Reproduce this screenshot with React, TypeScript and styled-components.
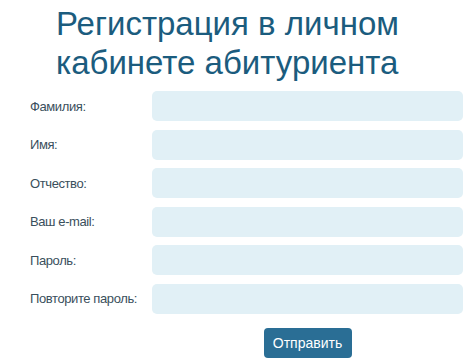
import styled, { createGlobalStyle } from "styled-components";

const GlobalStyle = createGlobalStyle`
  body {
    margin: 0;
    background: #ffffff;
    font-family: "Liberation Sans", Arial, sans-serif;
  }
`;

const Page = styled.div`
  width: 474px;
  height: 358px;
  overflow: hidden;
  display: flex;
  flex-direction: column;
`;

const Title = styled.h1`
  margin: 0;
  padding: 4px 0 0 56px;
  font-size: 33px;
  font-weight: 400;
  line-height: 39px;
  color: #1b5c7e;
`;

const Form = styled.form`
  display: flex;
  flex-direction: column;
  gap: 8.6px;
  padding: 9px 11px 0 30px;
`;

const Row = styled.label`
  display: flex;
  align-items: center;
`;

const Label = styled.span`
  width: 122px;
  font-size: 13px;
  letter-spacing: -0.4px;
  color: #3a4f5c;
`;

const Field = styled.input`
  width: 311px;
  height: 30px;
  box-sizing: border-box;
  border: none;
  border-radius: 5px;
  background: #e1f0f6;
  outline: none;
`;

const Actions = styled.div`
  display: flex;
  justify-content: center;
  padding-left: 122px;
  margin-top: 5px;
`;

const Submit = styled.button`
  width: 88px;
  height: 30px;
  border: none;
  border-radius: 4px;
  background: #2a6e95;
  color: #ffffff;
  font-family: "Liberation Sans", Arial, sans-serif;
  font-size: 14px;
  cursor: pointer;
`;

const fields = [
  { label: "Фамилия:", type: "text" },
  { label: "Имя:", type: "text" },
  { label: "Отчество:", type: "text" },
  { label: "Ваш e-mail:", type: "email" },
  { label: "Пароль:", type: "password" },
  { label: "Повторите пароль:", type: "password" },
];

export default function App() {
  return (
    <Page>
      <GlobalStyle />
      <Title>
        Регистрация в личном
        <br />
        кабинете абитуриента
      </Title>
      <Form onSubmit={(e) => e.preventDefault()}>
        {fields.map((f) => (
          <Row key={f.label}>
            <Label>{f.label}</Label>
            <Field type={f.type} />
          </Row>
        ))}
        <Actions>
          <Submit type="submit">Отправить</Submit>
        </Actions>
      </Form>
    </Page>
  );
}
